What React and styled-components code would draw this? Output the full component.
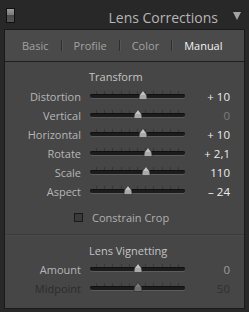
import React from "react";
import styled, { createGlobalStyle } from "styled-components";

const GlobalStyle = createGlobalStyle`
  body {
    margin: 0;
    background: #282828;
    font-family: "Open Sans", "DejaVu Sans", sans-serif;
  }
`;

const Wrapper = styled.div`
  width: 249px;
  height: 312px;
  background: #282828;
  overflow: hidden;
`;

const Header = styled.div`
  height: 29px;
  display: flex;
  align-items: center;
  padding: 0 8px 0 6px;
  box-sizing: border-box;
`;

const Toggle = styled.div`
  width: 7px;
  height: 13px;
  border: 1px solid #101010;
  background: linear-gradient(#9a9a9a 0%, #7a7a7a 45%, #4a4a4a 50%, #555 100%);
  margin-top: 2px;
`;

const Title = styled.div`
  flex: 1;
  text-align: right;
  font-size: 14px;
  color: #b6b6b6;
  margin-right: 15px;
  margin-top: 5px;
`;

const Arrow = styled.div`
  width: 0;
  height: 0;
  border-left: 4.5px solid transparent;
  border-right: 4.5px solid transparent;
  border-top: 8px solid #a4a4a4;
  margin-top: 3px;
`;

const Panel = styled.div`
  margin: 0 4px;
  height: 280px;
  box-sizing: border-box;
  border: 1px solid #1a1a1a;
  background: #464646;
`;

const Tabs = styled.div`
  height: 32px;
  box-sizing: border-box;
  display: flex;
  align-items: center;
  gap: 12px;
  padding: 0 0 0 17px;
  background: #4a4a4a;
  border-bottom: 1px solid #1e1e1e;
`;

const Tab = styled.span`
  font-size: 11px;
  color: ${(p) => (p.$active ? "#f2f2f2" : "#a2a2a2")};
`;

const TabDivider = styled.span`
  width: 1px;
  height: 11px;
  background: #2e2e2e;
  box-shadow: 1px 0 0 #555;
`;

const Section = styled.div`
  padding: ${(p) => p.$top}px 0 0;
`;

const Heading = styled.div`
  font-size: 11px;
  line-height: 14px;
  color: #c4c4c4;
  margin-bottom: ${(p) => p.$gap}px;
  padding-left: 84px;
`;

const Row = styled.div`
  display: grid;
  grid-template-columns: 76px 95px 36px;
  column-gap: 9px;
  align-items: center;
  height: 19px;
`;

const Label = styled.div`
  text-align: right;
  font-size: 11px;
  color: ${(p) => (p.$disabled ? "#2c2c2c" : "#b6b6b6")};
`;

const Slider = styled.div`
  position: relative;
  height: 19px;
`;

const Ticks = styled.div`
  position: absolute;
  left: 6px;
  right: 6px;
  top: 4px;
  height: 3px;
  background: repeating-linear-gradient(
    90deg,
    #363636 0,
    #363636 1px,
    transparent 1px,
    transparent 8.2px
  );
`;

const Groove = styled.div`
  position: absolute;
  left: 0;
  right: 0;
  top: 7px;
  height: 4px;
  border-radius: 2px;
  background: #1c1c1c;
  box-shadow: 0 1px 0 #5c5c5c, inset 0 1px 0 #111;
`;

const Thumb = styled.svg`
  position: absolute;
  top: 3px;
  width: 10px;
  height: 10px;
  margin-left: -5px;
`;

const Value = styled.div`
  text-align: right;
  font-size: 11.5px;
  color: ${(p) => p.$color};
`;

const CheckRow = styled.div`
  display: flex;
  align-items: center;
  gap: 9px;
  padding: 7px 0 0 69px;
  height: 18px;
`;

const Checkbox = styled.div`
  width: 7px;
  height: 7px;
  border: 1px solid #1a1a1a;
  background: #3a3a3a;
`;

const CheckLabel = styled.span`
  font-size: 11px;
  color: #b0b0b0;
`;

const Separator = styled.div`
  height: 1px;
  background: #3a3a3a;
  box-shadow: 0 1px 0 #4c4c4c;
  margin-top: 8px;
`;

function SliderRow({ label, value, pos, color = "#ececec", disabled }) {
  return (
    <Row>
      <Label $disabled={disabled}>{label}</Label>
      <Slider>
        <Ticks />
        <Groove />
        <Thumb style={{ left: `${pos}px` }} viewBox="0 0 10 10">
          <path
            d="M5 0.5 L8.5 5 L9 8.5 Q9 9.5 8 9.5 L2 9.5 Q1 9.5 1 8.5 L1.5 5 Z"
            fill={disabled ? "#6e6e6e" : "#a9a9a9"}
            stroke="#2a2a2a"
            strokeWidth="0.6"
          />
          <path d="M5 1.5 L7.5 5 L2.5 5 Z" fill={disabled ? "#7a7a7a" : "#c4c4c4"} />
        </Thumb>
      </Slider>
      <Value $color={color}>{value}</Value>
    </Row>
  );
}

export default function App() {
  return (
    <Wrapper>
      <GlobalStyle />
      <Header>
        <Toggle />
        <Title>Lens Corrections</Title>
        <Arrow />
      </Header>
      <Panel>
        <Tabs>
          <Tab>Basic</Tab>
          <TabDivider />
          <Tab>Profile</Tab>
          <TabDivider />
          <Tab>Color</Tab>
          <TabDivider />
          <Tab $active>Manual</Tab>
        </Tabs>
        <Section $top={8}>
          <Heading $gap={3}>Transform</Heading>
          <SliderRow label="Distortion" value="+ 10" pos={53} />
          <SliderRow label="Vertical" value="0" pos={48} color="#7c7c7c" />
          <SliderRow label="Horizontal" value="+ 10" pos={53} />
          <SliderRow label="Rotate" value="+ 2,1" pos={58} />
          <SliderRow label="Scale" value="110" pos={56} />
          <SliderRow label="Aspect" value="– 24" pos={38} />
          <CheckRow>
            <Checkbox />
            <CheckLabel>Constrain Crop</CheckLabel>
          </CheckRow>
        </Section>
        <Separator />
        <Section $top={9}>
          <Heading $gap={2}>Lens Vignetting</Heading>
          <SliderRow label="Amount" value="0" pos={48} color="#9c9c9c" />
          <SliderRow label="Midpoint" value="50" pos={48} color="#303030" disabled />
        </Section>
      </Panel>
    </Wrapper>
  );
}
